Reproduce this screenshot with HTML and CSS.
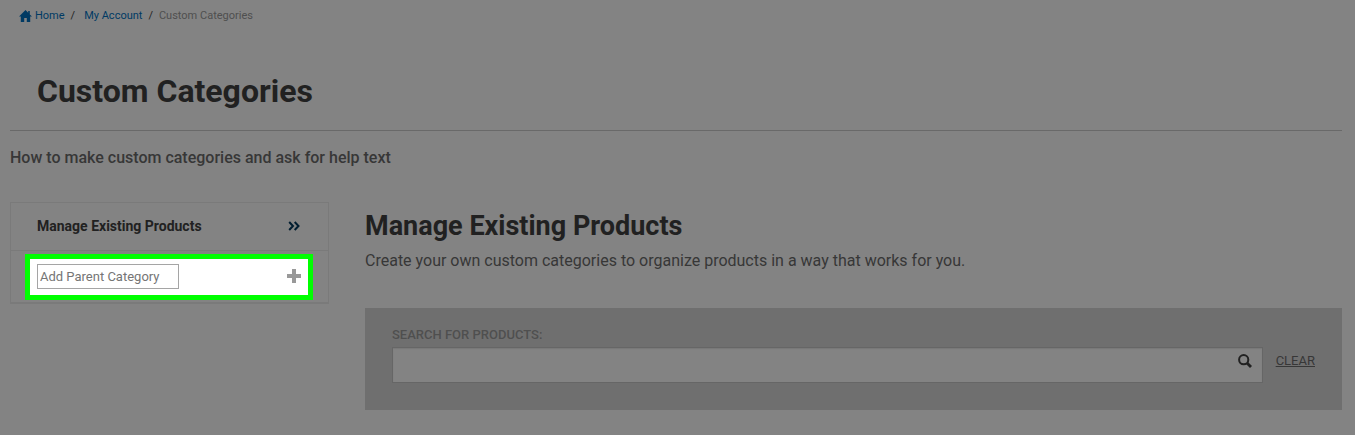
FILE: index.html
```
<!DOCTYPE html>
<html lang="en">

	<head>
		<meta charset="UTF-8">
		<title>Custom Categories</title>
		<link rel="stylesheet" href="styles.css">
	</head>

	<body>
		<nav class="breadcrumb">
			<a href="#" class="home">
				<svg width="13" height="12" viewBox="0 0 13 12"><path d="M6.5 0 0 6.6h1.8V12h3.4V8h2.6v4h3.4V6.6H13L10.8 4.4V1H9.2v1.8z" fill="currentColor"/></svg>
				Home
			</a>
			<span class="slash">/</span>
			<a href="#" class="account">My Account</a>
			<span class="slash">/</span>
			<span class="current">Custom Categories</span>
		</nav>

		<h1 class="page-title">Custom Categories</h1>
		<p class="help-text">How to make custom categories and ask for help text</p>

		<div class="columns">
			<aside class="sidebar">
				<a href="#" class="sidebar-link">
					Manage Existing Products
					<svg width="12" height="10" viewBox="0 0 12 10"><path d="M1.2 1 5 5 1.2 9M6.7 1l3.8 4-3.8 4" fill="none" stroke="currentColor" stroke-width="2"/></svg>
				</a>
				<form class="add-category">
					<input type="text" class="category-input" placeholder="Add Parent Category" aria-label="Add Parent Category">
					<button type="button" class="add-button" aria-label="Add">
						<svg width="14" height="14" viewBox="0 0 14 14"><path d="M5 0h4v5h5v4H9v5H5V9H0V5h5z" fill="currentColor"/></svg>
					</button>
				</form>
			</aside>

			<main class="main">
				<h2 class="main-title">Manage Existing Products</h2>
				<p class="main-text">Create your own custom categories to organize products in a way that works for you.</p>
				<form class="search-panel">
					<label for="search" class="search-label">SEARCH FOR PRODUCTS:</label>
					<div class="search-row">
						<div class="search-box">
							<input type="text" id="search" class="search-input">
							<button type="button" class="search-button" aria-label="Search">
								<svg width="14" height="14" viewBox="0 0 14 14"><circle cx="5.7" cy="5.7" r="4.6" fill="none" stroke="currentColor" stroke-width="2"/><path d="m9 9 4 4" stroke="currentColor" stroke-width="2.8"/></svg>
							</button>
						</div>
						<a href="#" class="clear">CLEAR</a>
					</div>
				</form>
			</main>
		</div>
	</body>

</html>
```
FILE: styles.css
```
* {
	box-sizing: border-box;
	margin: 0;
}

body {
	padding: 8px 13px 24px 10px;
	background: #838383;
	color: #373737;
	font-family: Roboto, "Liberation Sans", sans-serif;
	font-size: 16px;
}

svg {
	display: block;
}

button {
	padding: 0;
	border: 0;
	background: none;
	cursor: pointer;
}

/* breadcrumb */
.breadcrumb {
	display: flex;
	align-items: center;
	gap: 6px;
	padding-left: 9px;
	font-size: 11px;
	line-height: 15px;
}

.breadcrumb a {
	color: #003a63;
	text-decoration: none;
}

.home {
	display: flex;
	align-items: center;
	gap: 3px;
}

.account {
	padding-left: 3px;
}

.slash {
	color: #222;
}

.current {
	color: #4f4f4f;
}

/* heading */
.page-title {
	margin-top: 46px;
	padding: 0 27px 17px;
	border-bottom: 1px solid #696969;
	color: #212121;
	font-size: 32px;
	font-weight: 700;
	line-height: 44px;
}

.help-text {
	margin-top: 16px;
	font-weight: 500;
	line-height: 22px;
}

.columns {
	display: flex;
	align-items: flex-start;
	gap: 36px;
	margin-top: 33px;
}

/* sidebar */
.sidebar {
	flex: 0 0 319px;
	border: 1px solid #7a7a7a;
	border-bottom-width: 2px;
}

.sidebar-link {
	display: flex;
	align-items: center;
	justify-content: space-between;
	height: 48px;
	padding: 0 28px 2px 26px;
	border-bottom: 1px solid #7a7a7a;
	color: #212121;
	font-size: 14px;
	font-weight: 700;
	text-decoration: none;
}

.sidebar-link svg {
	color: #001d30;
}

.add-category {
	display: flex;
	align-items: center;
	justify-content: space-between;
	height: 46px;
	margin: 3px 15px 2px 14px;
	padding: 0 7px 2px;
	border: 5px solid #0f0;
	background: #fff;
}

.category-input {
	width: 142px;
	height: 25px;
	padding: 0 2px;
	border: 1px solid #a5a5a5;
	border-radius: 0;
	font-family: inherit;
	font-size: 13px;
}

.category-input::placeholder {
	color: #757575;
}

.add-button {
	color: #999;
}

/* main column */
.main {
	flex: 1;
	min-width: 0;
}

.main-title {
	margin-top: 5px;
	color: #212121;
	font-size: 27px;
	font-weight: 700;
	line-height: 38px;
}

.main-text {
	margin-top: 5px;
	line-height: 22px;
}

.search-panel {
	margin-top: 36px;
	padding: 17px 27px 27px;
	background: #6f6f6f;
}

.search-label {
	display: block;
	margin-bottom: 2px;
	color: #4f4f4f;
	font-size: 13px;
	font-weight: 500;
	line-height: 20px;
}

.search-row {
	display: flex;
	align-items: flex-start;
	gap: 13px;
}

.search-box {
	display: flex;
	align-items: flex-start;
	flex: 1;
	height: 36px;
	padding: 6px 10px 0 4px;
	border: 1px solid #666;
	background: #838383;
	box-shadow: inset 0 1px 1px rgba(0, 0, 0, .08);
}

.search-input {
	flex: 1;
	height: 22px;
	border: 0;
	outline: 0;
	background: transparent;
	font-family: inherit;
	font-size: 14px;
}

.search-button {
	color: #212121;
}

.clear {
	color: #373737;
	font-size: 13px;
	line-height: 28px;
}
```
